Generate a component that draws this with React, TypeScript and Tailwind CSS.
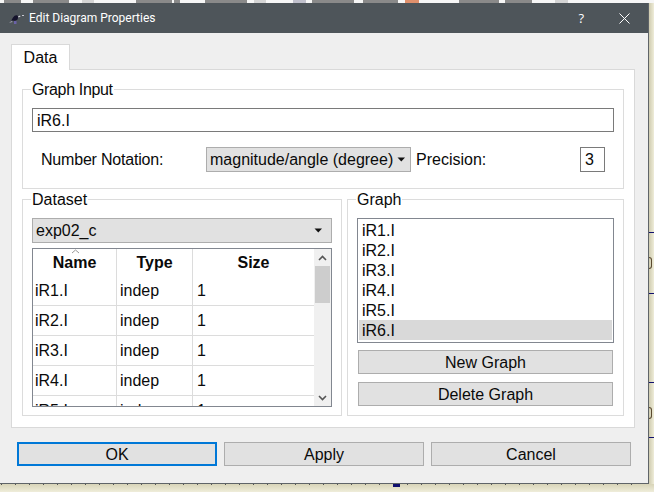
import React from "react";

const font = { fontFamily: '"Liberation Sans", Arial, sans-serif' };

function Group({ title, className, children, titleClass = "" }: { title: string; className: string; children: React.ReactNode; titleClass?: string }) {
  return (
    <div className={`border border-[#dcdcdc] px-[9px] ${className}`}>
      <div className={`-ml-px -mt-[10px] mb-[6px] h-[22px] w-fit bg-white pl-px pr-px text-[16px] leading-[20px] ${titleClass}`}>{title}</div>
      {children}
    </div>
  );
}

function Btn({ children, className }: { children: React.ReactNode; className: string }) {
  return (
    <div className={`flex h-[24px] items-center justify-center border border-[#adadad] bg-[#e1e1e1] pt-px text-[16px] leading-none ${className}`}>
      {children}
    </div>
  );
}

function Caret() {
  return (
    <svg width="9" height="5" viewBox="0 0 9 5" className="shrink-0">
      <path d="M0.5 0.5h7.5L4.25 4.5z" fill="#111" />
    </svg>
  );
}

function Chevron({ up }: { up?: boolean }) {
  return (
    <svg width="9" height="6" viewBox="0 0 9 6">
      <path d={up ? "M1 5L4.5 1.5L8 5" : "M1 1L4.5 4.5L8 1"} fill="none" stroke="#555" strokeWidth="1.6" />
    </svg>
  );
}

const ticks = Array.from({ length: 46 }, (_, i) => i);
const frags: [number, number, string][] = [
  [4, 21, "#8a8a8a"], [33, 69, "#8a8a8a"], [82, 94, "#d4d4d4"], [136, 172, "#8a8a8a"], [174, 180, "#8a8a8a"],
  [205, 247, "#8a8a8a"], [254, 266, "#d4d4d4"], [293, 306, "#c0c0cc"], [312, 354, "#8a8a8a"], [363, 398, "#8a8a8a"],
  [405, 419, "#e0906c"], [459, 499, "#8a8a8a"], [505, 532, "#8a8a8a"], [555, 568, "#d4d4d4"],
];

export default function App() {
  const rows = ["iR1.I", "iR2.I", "iR3.I", "iR4.I"];
  const list = ["iR1.I", "iR2.I", "iR3.I", "iR4.I", "iR5.I", "iR6.I"];
  return (
    <div className="flex h-[492px] w-[654px] flex-col overflow-hidden bg-[#e9e6d2] text-[#0a0a0a]" style={font}>
      <div className="flex h-[3px] shrink-0 bg-[#f6f6f6]">
        {frags.map(([a, b, c], i) => (
          <div key={a} className="h-[3px]" style={{ marginLeft: a - (i ? frags[i - 1][1] : 0), width: b - a, backgroundColor: c }} />
        ))}
      </div>
      <div className="flex min-h-0 flex-1">
        <div className="flex h-[481px] w-[649px] shrink-0 flex-col border-r border-b border-[#5f6468] bg-[#efefef]">
          <div className="flex h-[30px] shrink-0 items-center bg-[#4e555a] pl-[8px] text-white">
            <svg width="16" height="16" viewBox="0 0 16 16" className="shrink-0">
              <path d="M3 11L5 7.5Q7 4.5 9.5 5.5Q11 7 9.5 9.5Q7 11.5 5 10.5z" fill="#15132c" />
              <path d="M1 13L4 10.5L4.5 12z" fill="#9a9aa8" />
              <path d="M10 6.5L12 5.5L12.5 6.5L10.5 7.5z" fill="#d8d8e0" />
              <path d="M14 5h2v1h-2z" fill="#c8c8d0" />
              <path d="M6 11h2.5v3H6z" fill="#6a62a8" />
            </svg>
            <span className="ml-[5px] text-[12px] leading-none" style={{ fontFamily: 'Roboto, sans-serif' }}>Edit Diagram Properties</span>
            <span className="ml-auto text-[13px] leading-none" style={{ fontFamily: '"Open Sans", sans-serif' }}>?</span>
            <svg width="11" height="11" viewBox="0 0 11 11" className="ml-[35px] mr-[18px]">
              <path d="M0.5 0.5L10.5 10.5M10.5 0.5L0.5 10.5" stroke="#fff" strokeWidth="1" />
            </svg>
          </div>

          <div className="px-[11px] pt-[11px]">
            <div className="relative z-10 -mb-px flex h-[26px] w-[59px] items-center justify-center border border-b-0 border-[#d9d9d9] bg-white text-[16px] leading-none">Data</div>
            <div className="flex h-[359px] w-[624px] flex-col border border-[#d9d9d9] bg-white pl-[10px] pr-[10px] pt-[19px]">
              <Group title="Graph Input" titleClass="tracking-[-0.35px]" className="h-[100px] w-[602px] shrink-0">
                <div className="flex h-[24px] w-[582px] items-center border border-[#7a7a7a] pl-[4px] pt-px text-[16px] leading-none">iR6.I</div>
                <div className="mt-[15px] flex h-[25px] items-center text-[16px] leading-none">
                  <span className="ml-[9px] w-[165px] tracking-[-0.2px]">Number Notation:</span>
                  <div className="flex h-[25px] w-[205px] items-center border border-[#adadad] bg-[#e1e1e1] pl-[3px] pr-[4px]">
                    <span className="flex-1">magnitude/angle (degree)</span>
                    <Caret />
                  </div>
                  <span className="ml-[5px] w-[164px]">Precision:</span>
                  <div className="flex h-[25px] w-[25px] items-center border border-[#7a7a7a] pl-[4px]">3</div>
                </div>
              </Group>
              <div className="mt-[10px] flex gap-[5px]">
                <Group title="Dataset" className="h-[217px] w-[320px] shrink-0">
                  <div className="flex h-[25px] w-[300px] items-center border border-[#adadad] bg-[#e1e1e1] pl-[3px] pr-[8px] text-[16px] leading-none">
                    <span className="flex-1">exp02_c</span>
                    <Caret />
                  </div>
                  <div className="mt-[5px] flex h-[159px] w-[300px] overflow-hidden border border-[#828790]">
                    <div className="w-[281px] shrink-0">
                      <div className="relative grid h-[27px] grid-cols-[84px_76px_121px] text-[16px] font-bold leading-none">
                        <svg width="9" height="5" viewBox="0 0 9 5" className="absolute left-[38px] top-0">
                          <path d="M1 4L4.5 1L8 4" fill="none" stroke="#999" strokeWidth="1" />
                        </svg>
                        <div className="flex items-center justify-center border-r border-[#dcdcdc] pt-px">Name</div>
                        <div className="flex items-center justify-center border-r border-[#dcdcdc] pt-px">Type</div>
                        <div className="flex items-center justify-center pt-px">Size</div>
                      </div>
                      {[...rows, "iR5.I"].map((r) => (
                        <div key={r} className="grid h-[30px] grid-cols-[84px_76px_121px] border-b border-[#dcdcdc] text-[16px] leading-none">
                          <div className="flex items-center border-r border-[#dcdcdc] pl-[2px]">{r}</div>
                          <div className="flex items-center border-r border-[#dcdcdc] pl-[3px]">indep</div>
                          <div className="flex items-center pl-[4px]">1</div>
                        </div>
                      ))}
                    </div>
                    <div className="flex w-[17px] shrink-0 flex-col items-center bg-[#f0f0f0]">
                      <div className="flex h-[17px] items-center justify-center"><Chevron up /></div>
                      <div className="h-[37px] w-[15px] bg-[#cdcdcd]" />
                      <div className="mt-auto flex h-[17px] items-center justify-center"><Chevron /></div>
                    </div>
                  </div>
                </Group>
                <Group title="Graph" className="h-[217px] w-[277px] shrink-0">
                  <div className="h-[125px] w-[257px] border border-[#828790] px-[1px] pt-[1px]">
                    {list.map((r, i) => (
                      <div key={r} className={`flex h-[20px] items-center pl-[3px] pt-px text-[16px] leading-none ${i === 5 ? "bg-[#d9d9d9]" : ""}`}>{r}</div>
                    ))}
                  </div>
                  <Btn className="ml-[1px] mt-[7px] w-[255px]">New Graph</Btn>
                  <Btn className="ml-[1px] mt-[8px] w-[255px]">Delete Graph</Btn>
                </Group>
              </div>
            </div>
          </div>

          <div className="mt-[14px] flex gap-[7px] pl-[17px]">
            <Btn className="w-[200px] !border-2 !border-[#0078d7]">OK</Btn>
            <Btn className="w-[200px]">Apply</Btn>
            <Btn className="w-[200px]">Cancel</Btn>
          </div>
        </div>
        <div className="flex h-[481px] flex-1 flex-col bg-gradient-to-r from-[#cfcbb0] to-[#efedd9] pt-[229px]">
          <div className="h-px bg-[#10106e]" />
          <div className="mt-[24px] h-[12px] w-[3px] rounded-r-full border border-l-0 border-[#5a4a30]" />
          <div className="mt-[24px] h-px bg-[#10106e]" />
          <div className="mt-[88px] h-px bg-[#10106e]" />
          <div className="mt-[24px] h-[12px] w-[3px] rounded-r-full border border-l-0 border-[#5a4a30]" />
          <div className="mt-[18px] h-px bg-[#10106e]" />
        </div>
      </div>
      <div className="relative h-[8px] shrink-0 bg-gradient-to-b from-[#d8d4b8] to-[#efedda]">
        <div className="flex gap-[13px] pl-[1px]">
          {ticks.map((t) => <div key={t} className="h-px w-px bg-[#555]" />)}
        </div>
        <div className="absolute left-[393px] top-0 h-[3px] w-[7px] bg-[#10106e]" />
      </div>
    </div>
  );
}
